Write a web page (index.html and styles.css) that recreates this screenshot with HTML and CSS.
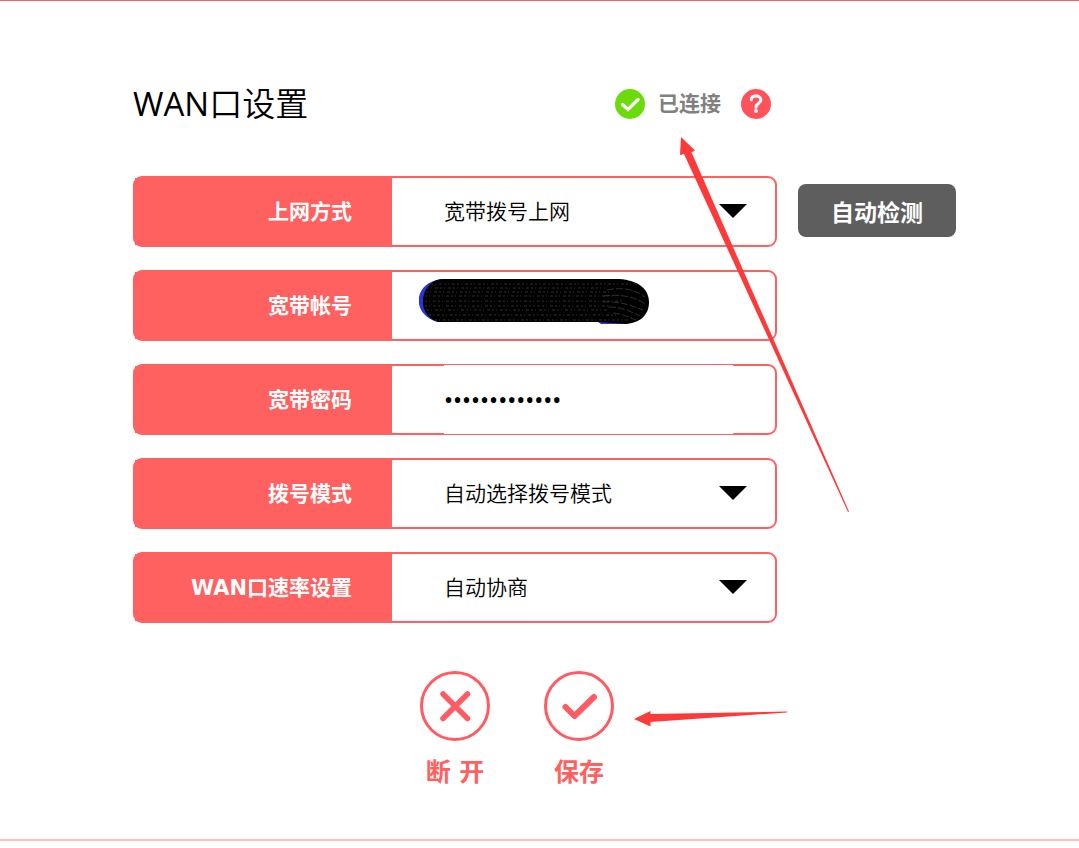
FILE: index.html
```html
<!DOCTYPE html>
<html lang="zh-CN">
<head>
<meta charset="utf-8">
<title>WAN口设置</title>
<link rel="stylesheet" href="styles.css">
</head>
<body>
<main class="panel">
  <form class="settings">
    <header class="heading">
      <h1 class="title"><span class="latin">WAN</span>口设置</h1>
      <div class="status">
        <svg class="status-icon" viewBox="0 0 30 30" aria-hidden="true"><circle cx="15" cy="15" r="15" fill="#6bdc0a"/><path d="M7.500 15.500l5.500 5L23 10.500" fill="none" stroke="#fff" stroke-width="3.300" stroke-linecap="round"/></svg>
        <span class="status-text">已连接</span>
        <button class="help" type="button" aria-label="帮助">
          <svg class="status-icon" viewBox="0 0 30 30" aria-hidden="true"><circle cx="15" cy="15" r="15" fill="#ff535c"/><path d="M10.300 10.800C10.300 8 12.500 7 15 7c2.800 0 4.900 1.500 4.900 4 0 3.700-4.900 3.400-4.900 7.200" fill="none" stroke="#fff" stroke-width="3" stroke-linecap="round"/><circle cx="15" cy="22" r="1.900" fill="#fff"/></svg>
        </button>
      </div>
    </header>

    <div class="row">
      <label class="label" for="mode">上网方式</label>
      <div class="field">
        <select class="control" id="mode"><option>宽带拨号上网</option></select>
        <svg class="caret" viewBox="0 0 28 14" aria-hidden="true"><path d="M0 0h28L14 14z"/></svg>
      </div>
    </div>
    <div class="row">
      <label class="label" for="account">宽带帐号</label>
      <div class="field">
        <input class="control" id="account" type="text">
        <svg class="scribble" viewBox="0 0 230 46" aria-hidden="true">
          <path d="M22 1C-6 5-8 36 18 44l8 0V1zM176 42h30v4h-24z" fill="#2b36d0"/>
          <path d="M24 1H200c19 1 30 10 30 23 0 14-10 21-23 22l-27-2H20C9 41 4 33 4 24 4 13 10 2 24 1z"/>
          <g fill="none" stroke="#303030" stroke-width="1" stroke-dasharray="2 2 1 3 3 2">
            <path d="M12 6H220M8 10H186M7 14H190M6 18H196M6 23H204M6 28H190M8 32H188M10 37H198M16 42H210"/>
            <path d="M188 12c14-3 28-1 38 7M184 18c16-2 31 0 42 8M184 24c17-1 27 3 40 8M190 29c12 0 21 4 31 9M194 35c10 1 15 4 23 7" stroke-dasharray="7 2"/>
          </g>
        </svg>
      </div>
    </div>
    <div class="row">
      <label class="label" for="password">宽带密码</label>
      <div class="field">
        <input class="control password" id="password" type="password" value="1234567890123">
      </div>
    </div>
    <div class="row">
      <label class="label" for="dial">拨号模式</label>
      <div class="field">
        <select class="control" id="dial"><option>自动选择拨号模式</option></select>
        <svg class="caret" viewBox="0 0 28 14" aria-hidden="true"><path d="M0 0h28L14 14z"/></svg>
      </div>
    </div>
    <div class="row">
      <label class="label" for="speed">WAN口速率设置</label>
      <div class="field">
        <select class="control" id="speed"><option>自动协商</option></select>
        <svg class="caret" viewBox="0 0 28 14" aria-hidden="true"><path d="M0 0h28L14 14z"/></svg>
      </div>
    </div>

    <div class="actions">
      <button class="action" type="button">
        <svg class="action-icon" viewBox="0 0 70 70" aria-hidden="true"><circle cx="35" cy="35" r="33.500" stroke-width="3"/><path d="M23 23L47.500 47.500M47.500 23L23 47.500" stroke-width="5.500"/></svg>
        <span>断 开</span>
      </button>
      <button class="action" type="submit">
        <svg class="action-icon" viewBox="0 0 70 70" aria-hidden="true"><circle cx="35" cy="35" r="33.500" stroke-width="3"/><path d="M21.500 36l9 9L50 26" stroke-width="6"/></svg>
        <span>保存</span>
      </button>
    </div>
  </form>
  <button class="detect" type="button">自动检测</button>

  <svg class="arrow arrow-status" viewBox="0 0 170 376" aria-hidden="true"><path d="M1 0L15 13.500l-3.500 1.800L169 374.500l-1 .5L4 17l-4 1z"/></svg>
  <svg class="arrow arrow-save" viewBox="0 0 154 16" aria-hidden="true"><path d="M0 8L16.500 0v3L153 .5v1L16.500 11v4.500z"/></svg>
</main>
</body>
</html>
```
FILE: styles.css
```css
* {
  box-sizing: border-box;
}

body {
  margin: 0;
  background: #fff;
  color: #000;
  font-family: "DejaVu Sans", "Noto Sans CJK SC", sans-serif;
  font-size: 21px;
}

button,
input,
select {
  margin: 0;
  padding: 0;
  border: 0;
  background: none;
  color: inherit;
  font: inherit;
}

.panel {
  position: relative;
  display: grid;
  grid-template-columns: 1fr 158px;
  column-gap: 21px;
  align-items: start;
  padding: 79px 123px 49px 133px;
  border-top: 1px solid #ff6060;
  border-bottom: 2px solid #ffbdbd;
}

.settings {
  display: flex;
  flex-direction: column;
  gap: 23px;
}

.heading {
  display: flex;
  align-items: center;
  justify-content: space-between;
  height: 48px;
  margin-bottom: 25px;
  padding-right: 6px;
}

.title {
  margin: 0;
  font-family: "Open Sans", "Noto Sans CJK SC", sans-serif;
  font-size: 33px;
  font-weight: 350;
  line-height: 48px;
}

.latin {
  font-weight: 400;
}

.status {
  display: flex;
  align-items: center;
  color: #808080;
  font-weight: 700;
}

.status-icon {
  display: block;
  width: 30px;
  height: 30px;
}

.status-text {
  margin: 0 20px 0 13px;
  line-height: 32px;
}

.row {
  display: grid;
  grid-template-columns: 257px 1fr;
  height: 71px;
  border: 2px solid #ff6060;
  border-radius: 9px;
}

.label {
  display: flex;
  align-items: center;
  justify-content: flex-end;
  padding-right: 40px;
  background: #ff6060;
  color: #fff;
  font-weight: 700;
  line-height: 32px;
}

.field {
  display: grid;
  grid-template-columns: 1fr 28px;
  align-items: center;
  padding: 0 28px 0 52px;
}

.control {
  grid-area: 1 / 1 / 2 / 3;
  width: 100%;
  height: 48px;
  appearance: none;
  outline: 0;
  font-weight: 350;
}

.caret {
  grid-area: 1 / 2;
  width: 28px;
  height: 14px;
  margin-bottom: 2px;
  pointer-events: none;
}

.password {
  grid-area: 1 / 1;
  width: calc(100% + 14px);
  height: 69px;
  margin: -1px 0;
  background: #fff;
  font-family: "Noto Sans", sans-serif;
  font-size: 24px;
  font-weight: 400;
}

.scribble {
  grid-area: 1 / 1;
  width: 230px;
  height: 46px;
  margin: -10px 0 0 -25px;
}

.actions {
  display: flex;
  gap: 54px;
  margin: 25px 0 0 287px;
}

.action {
  display: flex;
  flex-direction: column;
  align-items: center;
  gap: 15px;
  width: 70px;
  color: #ff6060;
  font-size: 25px;
  font-weight: 700;
  line-height: 34px;
  white-space: nowrap;
}

.action-icon {
  width: 70px;
  height: 70px;
  fill: none;
  stroke: #ff5b63;
  stroke-linecap: round;
  stroke-linejoin: round;
}

.detect {
  height: 53px;
  margin-top: 104px;
  border-radius: 8px;
  background: #5e5e5e;
  color: #fff;
  font-size: 23px;
  font-weight: 700;
}

.arrow {
  position: absolute;
  fill: #fc3a3a;
  pointer-events: none;
}

.arrow-status {
  top: 136px;
  left: 680px;
  width: 170px;
  height: 376px;
}

.arrow-save {
  top: 710px;
  left: 634px;
  width: 154px;
  height: 16px;
}
```
